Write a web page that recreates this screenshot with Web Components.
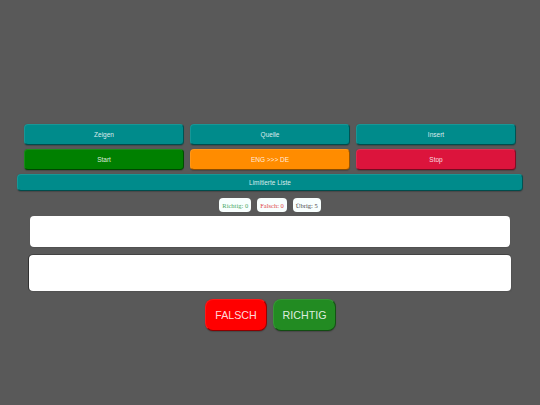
<!DOCTYPE html>
<html><head><meta charset="utf-8">
<style>
html,body{margin:0;height:405px;overflow:hidden;background:#595959;font-family:"Liberation Sans",Arial,sans-serif}
</style></head><body>
<quiz-app></quiz-app>
<template id="btn"><style>
:host{display:flex;align-items:center;justify-content:center;box-sizing:border-box;background:var(--bg,#008b8b);color:rgba(255,255,255,.86);font:var(--fs,6.5px) "Liberation Sans",Arial,sans-serif;height:var(--h,21px);border-radius:var(--r,4px);border:1px solid rgba(255,255,255,.1);border-right-color:rgba(0,0,0,.4);border-bottom-color:rgba(0,0,0,.45);box-shadow:0 .5px 1px rgba(0,0,0,.2)}
</style><slot></slot></template>
<template id="badge"><style>
:host{display:flex;align-items:center;box-sizing:border-box;height:14px;padding:0 3px;background:#f8fffe;border-radius:4px;font:6.5px "Liberation Serif","Times New Roman",serif;color:var(--c,#333)}
</style><slot></slot></template>
<template id="box"><style>
:host{display:block;box-sizing:border-box;background:#fff;border-radius:4px;height:var(--h,31px);margin:var(--m,0 30px);box-shadow:var(--s,0 1px 1px rgba(0,0,0,.1))}
</style><slot></slot></template>
<template id="app"><style>
:host{display:block;width:540px;height:405px;box-sizing:border-box;padding-top:124px}
.grid{display:grid;grid-template-columns:160px 160px 160px;column-gap:6px;row-gap:4px;padding:0 24px}
.wide{margin:4px 17px 0;--h:17px;--fs:6.5px}
.stats{display:flex;justify-content:center;gap:6px;margin:7px 0 4px}
.second{margin-top:8px;--h:36px;--m:0 29px;--s:-1px 0 0 rgba(0,0,0,.45),0 -1px 0 rgba(0,0,0,.25),1px 1px 1px rgba(0,0,0,.08)}
.actions{display:flex;justify-content:center;gap:6px;margin-top:8px;padding-left:1px;--h:32px;--r:8px;--fs:10.7px}
.actions quiz-btn:first-child{width:62px}
.actions quiz-btn:last-child{width:63px}
</style>
<div class="grid">
<quiz-btn>Zeigen</quiz-btn><quiz-btn>Quelle</quiz-btn><quiz-btn>Insert</quiz-btn>
<quiz-btn style="--bg:#008000">Start</quiz-btn><quiz-btn style="--bg:#ff8c00">ENG &gt;&gt;&gt; DE</quiz-btn><quiz-btn style="--bg:#dc143c">Stop</quiz-btn>
</div>
<quiz-btn class="wide">Limitierte Liste</quiz-btn>
<div class="stats">
<quiz-badge style="--c:#4aa865">Richtig: 0</quiz-badge><quiz-badge style="--c:#e04848">Falsch: 0</quiz-badge><quiz-badge style="--c:#444">Übrig: 5</quiz-badge>
</div>
<quiz-box></quiz-box>
<quiz-box class="second"></quiz-box>
<div class="actions">
<quiz-btn style="--bg:#ff0000">FALSCH</quiz-btn><quiz-btn style="--bg:#228b22">RICHTIG</quiz-btn>
</div>
</template>
<script>
for(const [n,t] of [['quiz-btn','btn'],['quiz-badge','badge'],['quiz-box','box'],['quiz-app','app']]){
customElements.define(n,class extends HTMLElement{constructor(){super();this.attachShadow({mode:'open'}).appendChild(document.getElementById(t).content.cloneNode(true))}});
}
</script>
</body></html>
